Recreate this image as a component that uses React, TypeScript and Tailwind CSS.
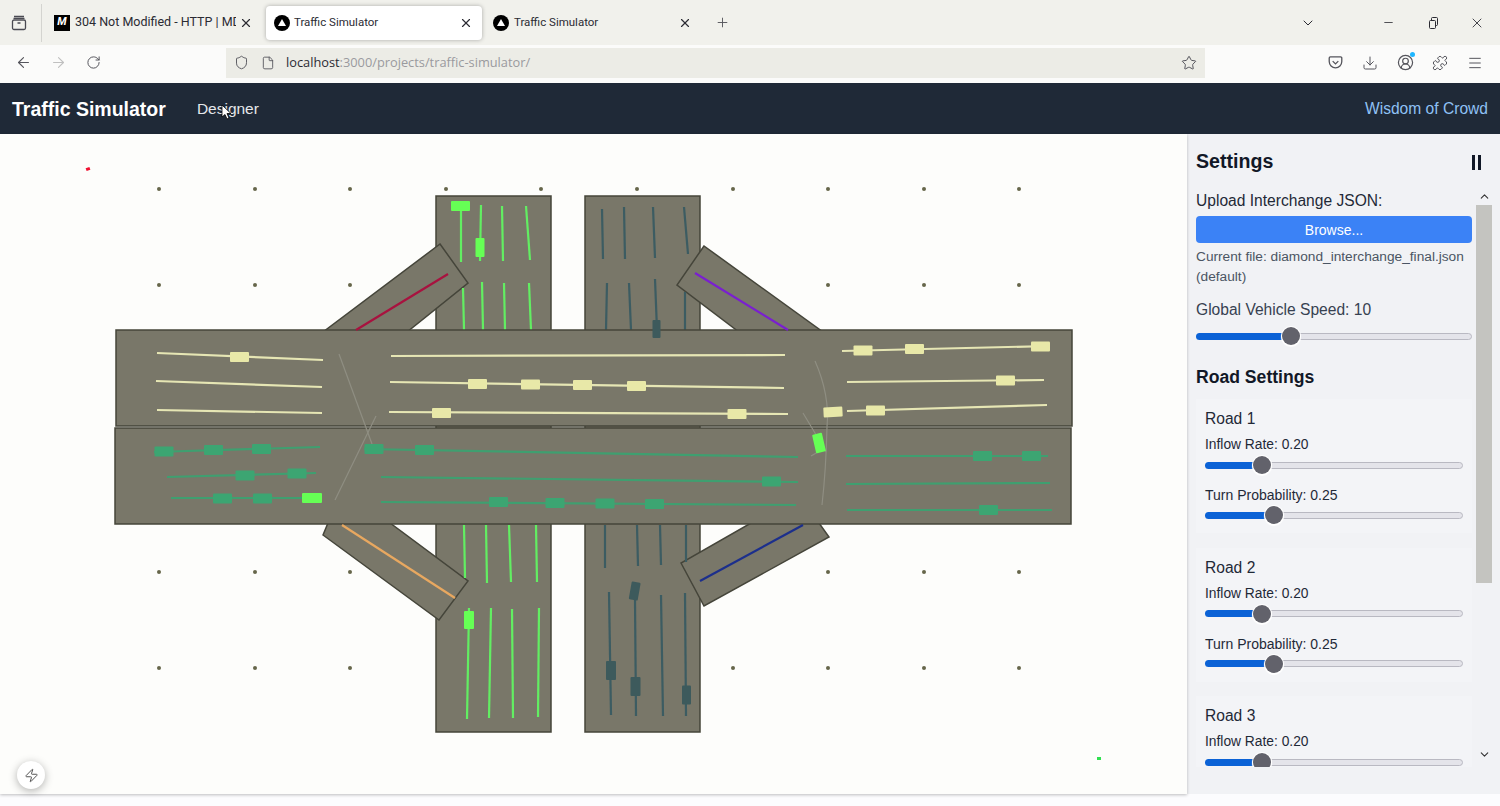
import { ArrowLeft, ArrowRight, ChevronDown, ChevronUp, CircleUserRound, Download, File, Menu, Minus, Plus, Puzzle, RotateCw, Shield, Star, X, Zap } from 'lucide-react'

type Seg = [number, number, number, number]
type Car = [number, number, number, number, number?]

const dotRows = [189, 285, 572, 668]
const dotCols = [159, 255, 350, 446, 541, 637, 733, 828, 924, 1019]

const ramps = [
  '440,244 468,283 407,332 323,332',
  '704,246 677,285 739,332 823,332',
  '323,535 439,620 468,581 390,523 328,523',
  '681,563 704,606 829,537 819,523 751,523',
]

const rampLines: { seg: Seg; color: string }[] = [
  { seg: [448, 274, 356, 330], color: '#a8123f' },
  { seg: [695, 273, 788, 330], color: '#7a1fd0' },
  { seg: [342, 525, 455, 598], color: '#e8a860' },
  { seg: [700, 581, 803, 525], color: '#1c2f8c' },
]

const brightLines: Seg[] = [
  [461, 210, 461, 262], [481, 205, 480, 261], [502, 206, 503, 261], [526, 206, 530, 260],
  [463, 288, 464, 330], [482, 282, 483, 330], [504, 283, 505, 330], [529, 283, 531, 330],
  [464, 525, 465, 578], [486, 525, 487, 583], [509, 525, 511, 582], [536, 525, 537, 582],
  [469, 608, 467, 719], [491, 608, 489, 718], [512, 609, 513, 718], [539, 608, 538, 717],
]

const darkLines: Seg[] = [
  [602, 209, 603, 259], [624, 207, 625, 259], [653, 207, 655, 258], [684, 207, 688, 254],
  [607, 283, 606, 330], [629, 283, 631, 330], [655, 279, 657, 330], [685, 292, 685, 330],
  [605, 525, 605, 568], [637, 525, 638, 566], [660, 525, 661, 565], [686, 525, 686, 562],
  [609, 592, 611, 715], [635, 600, 636, 716], [661, 595, 663, 716], [685, 593, 686, 716],
]

const paleLines: Seg[] = [
  [157, 353, 323, 360], [156, 381, 322, 387], [157, 410, 322, 413],
  [391, 356, 785, 355], [390, 382, 784, 388], [389, 412, 788, 414],
  [842, 351, 1050, 346], [847, 382, 1044, 380], [847, 411, 1047, 405],
]

const tealLines: Seg[] = [
  [154, 452, 320, 447], [167, 477, 316, 473], [171, 498, 322, 498],
  [364, 449, 798, 457], [381, 477, 798, 482], [381, 502, 796, 505],
  [846, 456, 1048, 456], [846, 484, 1050, 483], [847, 510, 1052, 510],
]

const connectors = [
  'M339 354 L372 444',
  'M376 416 L335 500',
  'M815 361 Q830 395 827 427 Q826 470 822 505',
  'M803 413 L815 433 L826 452',
  'M811 456 L825 448',
]

// x, y are centres, w / h are the car's box, last value is the angle
const paleCars: Car[] = [
  [239.5, 357, 19, 10], [477.5, 384, 19, 10], [530.5, 384.5, 19, 10], [582.5, 385, 19, 10], [636.5, 386, 19, 10],
  [441.5, 413, 19, 10], [737, 414, 19, 10], [863, 350.5, 19, 10], [914.5, 349, 19, 10], [1040.5, 346.5, 19, 10],
  [1005.5, 380.5, 19, 10], [875.5, 410.5, 19, 10], [833, 412, 19, 10, -3],
]

const tealCars: Car[] = [
  [164, 451.5, 19, 10], [213.5, 450, 19, 10], [261.5, 449, 19, 10], [245, 475.5, 19, 10], [297, 473.5, 19, 10],
  [222.5, 498.5, 19, 10], [262.5, 498.5, 19, 10], [374, 449, 19, 10], [424.5, 450, 19, 10], [771.5, 481.5, 19, 10],
  [498.5, 502, 19, 10], [555, 503, 19, 10], [605, 503.5, 19, 10], [654.5, 504, 19, 10],
  [982.5, 456, 19, 10], [1031.5, 456, 19, 10], [988.5, 510, 19, 10],
]

const greenCars: Car[] = [
  [460.5, 206, 19, 10], [480, 247.5, 9, 19], [312, 498, 20, 10], [469, 620, 10, 18], [819, 443, 10, 19, -13],
]

const darkCars: Car[] = [
  [656.5, 329, 8, 18], [634.7, 591, 9, 18, 10], [611, 670.5, 10, 19], [635.5, 686.5, 10, 19], [686.5, 695, 9, 19],
]

const roads = [1, 2, 3]

const Cars = ({ cars, fill }: { cars: Car[]; fill: string }) => (
  <>
    {cars.map(([x, y, w, h, angle], i) => (
      <rect
        key={i}
        x={x - w / 2}
        y={y - h / 2}
        width={w}
        height={h}
        rx={1}
        fill={fill}
        transform={angle ? `rotate(${angle} ${x} ${y})` : undefined}
      />
    ))}
  </>
)

const Lines = ({ segs, color, width = 2.2 }: { segs: Seg[]; color: string; width?: number }) => (
  <>
    {segs.map(([x1, y1, x2, y2], i) => (
      <line key={i} x1={x1} y1={y1} x2={x2} y2={y2} stroke={color} strokeWidth={width} />
    ))}
  </>
)

const NextIcon = () => (
  <svg width="16" height="16" viewBox="0 0 16 16" className="shrink-0">
    <circle cx="8" cy="8" r="8" fill="#000" />
    <path d="M8 4 L12 11 H4 Z" fill="#fff" />
  </svg>
)

const Slider = ({ value }: { value: number }) => (
  <div className="relative flex h-5 items-center">
    <div className="h-[7px] rounded-l-full bg-[#0b62d6]" style={{ width: `${value}%` }} />
    <div className="h-[7px] flex-1 rounded-r-full border border-[#b9b9c2] bg-[#e4e4ea]" />
    <div
      className="absolute top-[1px] h-[18px] w-[18px] -translate-x-1/2 rounded-full bg-[#62626b] shadow-[0_0_0_1px_#fff,0_1px_1px_1px_#fff]"
      style={{ left: `${value}%` }}
    />
  </div>
)

const Simulation = () => (
  <svg width="1187" height="660" viewBox="0 134 1187 660">
    {dotRows.map((y) =>
      dotCols.map((x) => <circle key={`${x}-${y}`} cx={x} cy={y} r={2} fill="#66664a" />)
    )}
    <rect x="436" y="196" width="115" height="536" fill="#797769" stroke="#45453a" strokeWidth="1.5" />
    <rect x="585" y="196" width="115" height="536" fill="#797769" stroke="#45453a" strokeWidth="1.5" />
    {ramps.map((points) => (
      <polygon key={points} points={points} fill="#797769" stroke="#45453a" strokeWidth="1.5" />
    ))}
    <Lines segs={brightLines} color="#62ee62" />
    <Lines segs={darkLines} color="#3c5c62" />
    <rect x="116" y="330" width="956" height="96" fill="#797769" stroke="#45453a" strokeWidth="1.5" />
    <rect x="115" y="428" width="956" height="96" fill="#797769" stroke="#45453a" strokeWidth="1.5" />
    {rampLines.map(({ seg, color }) => (
      <Lines key={color} segs={[seg]} color={color} />
    ))}
    {connectors.map((d) => (
      <path key={d} d={d} fill="none" stroke="#8f8e82" strokeWidth="1.2" />
    ))}
    <Lines segs={paleLines} color="#e6e6b4" />
    <Lines segs={tealLines} color="#3f9f70" />
    <Cars cars={paleCars} fill="#e8e8a8" />
    <Cars cars={tealCars} fill="#3ca572" />
    <Cars cars={greenCars} fill="#66ff55" />
    <Cars cars={darkCars} fill="#3d5a5c" />
    <rect x="86" y="167.500" width="4" height="3" fill="#f01030" transform="rotate(-20 88 169)" />
    <rect x="1097" y="757" width="4" height="3" fill="#30e050" />
  </svg>
)

export default function App() {
  return (
    <div className="flex h-[806px] w-[1500px] flex-col overflow-hidden bg-[#fcfcfe] font-['Liberation_Sans',Arial,sans-serif] text-[#111827]">
      {/* Browser tabs */}
      <div className="flex h-[45px] items-center bg-[#f1f1ec] font-['Roboto',sans-serif] text-[11.5px] text-[#2b2b33]">
        <div className="flex h-[38px] w-[42px] items-center border-r border-[#d4d4d0] pl-[11px]">
          <svg width="16" height="16" viewBox="0 0 16 16" fill="none" stroke="#4a4a52" strokeWidth="1.3">
            <rect x="1.5" y="5" width="13" height="9.5" rx="1.5" />
            <path d="M3 1.5h10M2.5 3.3h11M6.5 8h3" />
          </svg>
        </div>
        <div className="flex w-[224px] items-center pl-3 pr-[13px]">
          <div className="flex h-4 w-4 shrink-0 items-center justify-center bg-black text-[11px] font-bold italic text-white">M</div>
          <span className="ml-[5px] w-[161px] overflow-hidden whitespace-nowrap text-[12.5px]">304 Not Modified - HTTP | MDN</span>
          <X size={14} className="ml-auto shrink-0" />
        </div>
        <div className="flex h-[34px] w-[216px] items-center rounded bg-white pl-2 pr-[9px] shadow-[0_0_4px_rgba(0,0,0,0.3)]">
          <NextIcon />
          <span className="ml-[4px]">Traffic Simulator</span>
          <X size={14} className="ml-auto" />
        </div>
        <div className="flex w-[214px] items-center pl-[11px] pr-[4px]">
          <NextIcon />
          <span className="ml-[5px]">Traffic Simulator</span>
          <X size={14} className="ml-auto" />
        </div>
        <Plus size={15} strokeWidth={1.5} className="ml-[19px] text-[#55555c]" />
        <ChevronDown size={16} strokeWidth={1.5} className="ml-[570px]" />
        <Minus size={13} strokeWidth={1.5} className="ml-[66px]" />
        <svg width="12" height="12" viewBox="0 0 12 12" fill="none" stroke="#2b2b33" className="ml-[32px]">
          <rect x="2.5" y="3.5" width="6" height="8" rx="1" />
          <path d="M4.5 3.5V1.5a1 1 0 0 1 1-1h4a1 1 0 0 1 1 1v6a1 1 0 0 1-1 1h-1" />
        </svg>
        <X size={16} strokeWidth={1.3} className="ml-[30px]" />
      </div>

      {/* Browser toolbar */}
      <div className="flex h-[38px] items-center bg-[#fbfbfa] pb-[3px] text-[#55555c]">
        <ArrowLeft size={17} strokeWidth={1.6} className="ml-[15px]" />
        <ArrowRight size={17} strokeWidth={1.6} className="ml-[18px] text-[#c0c0c0]" />
        <RotateCw size={15} strokeWidth={1.6} className="ml-[19px]" />
        <div className="ml-[125px] flex h-[30px] w-[979px] items-center bg-[#ecece6] pl-2 pr-2">
          <Shield size={15} strokeWidth={1.5} />
          <File size={14} strokeWidth={1.5} className="ml-3" />
          <span className="ml-[11px] font-['Open_Sans',sans-serif] text-[12.8px] text-[#9a9a9e]">
            <span className="text-[#2b2b33]">localhost</span>:3000/projects/traffic-simulator/
          </span>
          <Star size={16} strokeWidth={1.5} className="ml-auto" />
        </div>
        <svg width="15" height="15" viewBox="0 0 16 16" fill="none" stroke="#55555c" strokeWidth="1.4" className="ml-[123px]">
          <path d="M2.5 2h11a1.2 1.2 0 0 1 1.2 1.2V7a6.7 6.7 0 0 1-13.4 0V3.200A1.2 1.2 0 0 1 2.500 2z" />
          <path d="M5 6.500l3 3 3-3" />
        </svg>
        <Download size={16} strokeWidth={1.5} className="ml-[19px]" />
        <div className="relative ml-[19px]">
          <CircleUserRound size={17} strokeWidth={1.7} />
          <div className="absolute -right-[1px] -top-[2px] h-[5px] w-[5px] rounded-full bg-[#1fb6ff]" />
        </div>
        <Puzzle size={16} strokeWidth={1.5} className="ml-[18px]" />
        <Menu size={16} strokeWidth={1.5} className="ml-[19px]" />
      </div>

      {/* App header */}
      <header className="flex h-[51px] items-center justify-between bg-[#1f2937] pl-3 pr-3 text-white">
        <nav className="flex items-center">
          <span className="text-[19.500px] font-bold leading-7">Traffic Simulator</span>
          <span className="relative ml-[31px] text-[15.500px] leading-6 text-[#e5e7eb]">
            Designer
            <svg width="11" height="16" viewBox="0 0 11 16" className="absolute left-[24px] top-[7px]">
              <path d="M1 1 L1 13 L4 10.500 L6 15 L8 14 L6 9.500 L10 9.500 Z" fill="#fff" stroke="#000" strokeWidth="0.8" />
            </svg>
          </span>
        </nav>
        <span className="text-[15.600px] leading-6 text-[#8fc1f5]">Wisdom of Crowd</span>
      </header>

      <main className="flex">
        <div className="relative h-[660px] w-[1187px] bg-[#fdfdfb] shadow-[0_1px_3px_rgba(0,0,0,0.25)]">
          <Simulation />
          <div className="absolute bottom-[5px] left-[17px] flex h-[28px] w-[28px] items-center justify-center rounded-full bg-white shadow-[0_2px_8px_rgba(0,0,0,0.3)]">
            <Zap size={15} strokeWidth={1.5} className="text-[#4a4a4a]" />
          </div>
        </div>

        {/* Settings panel */}
        <aside className="h-[660px] w-[313px] bg-[#f1f2f5] pl-[9px] pr-2 pt-[13px]">
          <div className="flex h-[41px] items-start justify-between pr-[11px]">
            <h2 className="text-[19.600px] font-bold leading-7">Settings</h2>
            <div className="mt-[8px] flex gap-[3px]">
              <div className="h-[15px] w-[3px] bg-[#111827]" />
              <div className="h-[15px] w-[3px] bg-[#111827]" />
            </div>
          </div>
          <div className="flex h-[579px] gap-1">
            <div className="w-[276px] shrink-0 overflow-hidden">
              <label className="mb-[3px] mt-[1px] block text-[15.600px] leading-6 text-[#1f2937]">Upload Interchange JSON:</label>
              <button className="h-[27px] w-full rounded bg-[#3b82f6] text-sm text-white">Browse...</button>
              <p className="mt-1 text-[13.700px] leading-5 text-[#4b5563]">Current file: diamond_interchange_final.json (default)</p>
              <label className="mt-[11px] block text-[15.600px] leading-6 text-[#374151]">Global Vehicle Speed: 10</label>
              <div className="mt-1">
                <Slider value={34.4} />
              </div>
              <h3 className="mb-2 mt-[17px] text-[17.600px] font-bold leading-7">Road Settings</h3>
              <div className="flex flex-col gap-[14.5px]">
                {roads.map((road) => (
                  <div key={road} className="bg-[#f3f4f7] px-[9px] pb-2 pt-2">
                    <h4 className="mb-1 text-[15.600px] leading-6 text-[#1f2937]">Road {road}</h4>
                    <div className="text-[13.800px] leading-5 text-[#1f2937]">Inflow Rate: 0.20</div>
                    <Slider value={22.1} />
                    <div className="mt-[10px] text-sm text-[#1f2937]">Turn Probability: 0.25</div>
                    <Slider value={26.7} />
                  </div>
                ))}
              </div>
            </div>
            {/* Scrollbar */}
            <div className="flex w-4 flex-col items-center text-[#333]">
              <div className="flex h-[17px] items-center">
                <ChevronUp size={13} strokeWidth={2} />
              </div>
              <div className="h-[378px] w-full bg-[#c4c4c0]" />
              <div className="mt-auto flex h-[17px] items-center pb-[8px]">
                <ChevronDown size={13} strokeWidth={2} />
              </div>
            </div>
          </div>
        </aside>
      </main>
    </div>
  )
}
